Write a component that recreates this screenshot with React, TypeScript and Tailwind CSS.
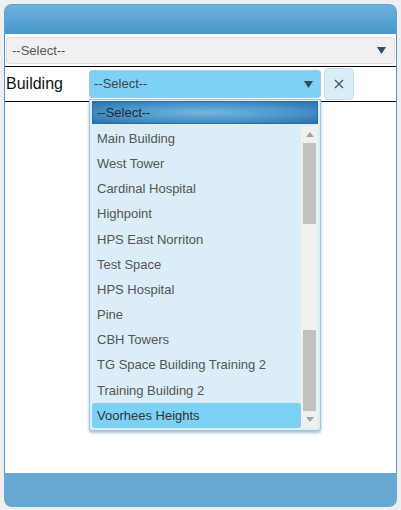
import { useState } from "react";

const buildings = [
  "Main Building",
  "West Tower",
  "Cardinal Hospital",
  "Highpoint",
  "HPS East Norriton",
  "Test Space",
  "HPS Hospital",
  "Pine",
  "CBH Towers",
  "TG Space Building Training 2",
  "Training Building 2",
  "Voorhees Heights",
];

function Caret({ className = "" }: { className?: string }) {
  return (
    <svg width="9" height="7" viewBox="0 0 9 7" className={className}>
      <path d="M0 0 L9 0 L4.5 7 Z" fill="#2e4d5e" />
    </svg>
  );
}

export default function App() {
  const [hovered] = useState("Voorhees Heights");

  return (
    <div className="w-[401px] h-[510px] bg-[#efefef] pt-[4px] pl-[4px] font-['Liberation_Sans',Arial,sans-serif]">
      <div className="w-[393px] h-[503px] flex flex-col">
        <div className="h-[30px] rounded-t-[8px] border border-b-0 border-[#5aa3d3] bg-gradient-to-b from-[#6eb2dd] to-[#4796cc]" />

        <div className="flex-1 bg-white border-x border-[#4a99cf] pt-[3px]">
          <div className="mx-[1px] h-[27px] flex items-center justify-between bg-[#f0f0f0] border border-[#dcdcdc] rounded-[4px] pl-[5px] pr-[8px]">
            <span className="text-[13px] text-[#555]">--Select--</span>
            <Caret />
          </div>

          <div className="mt-[2px] border-y border-black h-[36px] flex items-center">
            <div className="w-[84px] pl-[1px] text-[16px] text-[#111]">Building</div>
            <div className="relative h-[28px] w-[232px]">
              <div className="h-full flex items-center justify-between bg-[#7cd2f5] border border-[#9ccbe2] rounded-[3px] pl-[4px] pr-[7px]">
                <span className="text-[13px] text-[#444]">--Select--</span>
                <Caret />
              </div>

              <div className="absolute top-[29px] left-0 w-[232px] h-[332px] bg-[#dbedf6] border border-[#9fc6dc] rounded-b-[3px] shadow-[0_2px_3px_rgba(60,110,140,0.45)] pt-[1px] px-[2px] z-10">
                <div className="h-[23px] flex items-center pl-[4px] border border-[#2b6e9f] bg-[radial-gradient(ellipse_at_center,#74b6de_0%,#4a95cb_55%,#2a72a9_100%)] text-[13px] text-[#1e2a33]">
                  --Select--
                </div>
                <div className="mt-[2px] flex h-[302px]">
                  <div className="w-[209px] flex flex-col">
                    {buildings.map((b) => (
                      <div
                        key={b}
                        className={
                          b === hovered
                            ? "h-[25.2px] flex items-center pl-[5px] text-[13px] text-[#333] bg-[#7cd2f5] rounded-[3px]"
                            : "h-[25.2px] flex items-center pl-[5px] text-[13px] text-[#555]"
                        }
                      >
                        {b}
                      </div>
                    ))}
                  </div>
                  <div className="w-[17px] bg-[#f0f0f0] flex flex-col items-center">
                    <div className="h-[17px] flex items-center justify-center">
                      <svg width="8" height="5" viewBox="0 0 8 5">
                        <path d="M0 5 L8 5 L4 0 Z" fill="#a3a3a3" />
                      </svg>
                    </div>
                    <div className="h-[81px] w-[13px] bg-[#c1c1c1]" />
                    <div className="h-[106px]" />
                    <div className="h-[81px] w-[13px] bg-[#c1c1c1]" />
                    <div className="h-[17px] flex items-center justify-center">
                      <svg width="8" height="5" viewBox="0 0 8 5">
                        <path d="M0 0 L8 0 L4 5 Z" fill="#a3a3a3" />
                      </svg>
                    </div>
                  </div>
                </div>
              </div>
            </div>
            <button className="ml-[3px] w-[30px] h-[32px] flex items-center justify-center bg-[#d9edf7] border border-[#c8dfeb] rounded-[4px]">
              <svg width="10" height="10" viewBox="0 0 10 10">
                <path d="M1 1 L9 9 M9 1 L1 9" stroke="#3f5b6a" strokeWidth="1.4" />
              </svg>
            </button>
          </div>
        </div>

        <div className="h-[34px] bg-[#66aad4] rounded-b-[8px]" />
      </div>
    </div>
  );
}
